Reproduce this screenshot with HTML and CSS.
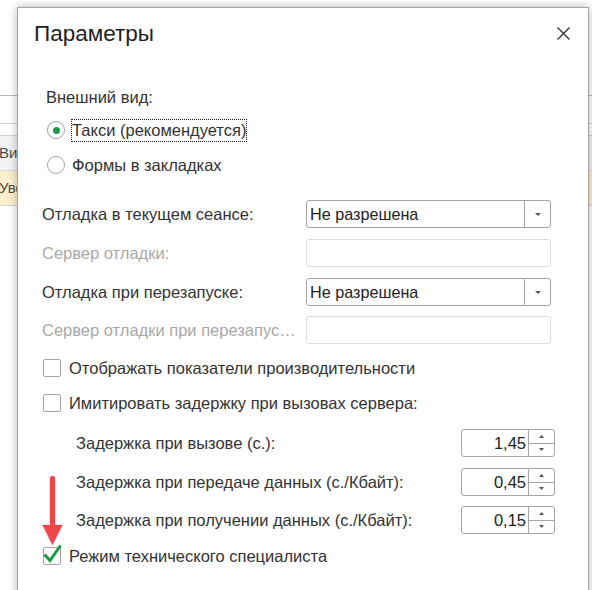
FILE: index.html
```html
<!DOCTYPE html>
<html lang="ru">
<head>
<meta charset="utf-8">
<title>Параметры</title>
<link rel="stylesheet" href="styles.css">
</head>
<body>
<div class="bg">
  <div class="bg-a"></div>
  <div class="bg-b"></div>
  <div class="bg-c"></div>
  <div class="bg-head">Вид</div>
  <div class="bg-sel">Уволенные</div>
</div>

<div class="dialog">
  <div class="dlg-head">
    <h1>Параметры</h1>
    <span class="close"><svg width="13" height="13" viewBox="0 0 13 13"><path d="M0.5 0.5L12.5 12.5M12.5 0.5L0.5 12.5" stroke="#333" stroke-width="1.4" fill="none"/></svg></span>
  </div>
  <div class="dlg-body">
    <div class="group-title">Внешний вид:</div>
    <div class="radio-row r-first"><span class="radio on"></span><span class="focus">Такси (рекомендуется)</span></div>
    <div class="radio-row r-second"><span class="radio"></span><span>Формы в закладках</span></div>

    <div class="field-row f1"><span class="lbl">Отладка в текущем сеансе:</span><div class="select"><span class="val">Не разрешена</span><span class="btn"><svg width="6" height="3" viewBox="0 0 6 3"><path d="M0 0H6L3 3Z" fill="#555"/></svg></span></div></div>
    <div class="field-row f2"><span class="lbl dim">Сервер отладки:</span><div class="input"></div></div>
    <div class="field-row f3"><span class="lbl">Отладка при перезапуске:</span><div class="select"><span class="val">Не разрешена</span><span class="btn"><svg width="6" height="3" viewBox="0 0 6 3"><path d="M0 0H6L3 3Z" fill="#555"/></svg></span></div></div>
    <div class="field-row f4"><span class="lbl dim">Сервер отладки при перезапуске:</span><div class="input"></div></div>

    <div class="check-row c1"><span class="box"></span><span>Отображать показатели производительности</span></div>
    <div class="check-row c2"><span class="box"></span><span>Имитировать задержку при вызовах сервера:</span></div>

    <div class="sub-row s1"><span class="sub-lbl">Задержка при вызове (с.):</span><div class="spin"><span class="num">1,45</span><span class="arrows"><span class="up"><svg width="5" height="3" viewBox="0 0 5 3"><path d="M0 3H5L2.5 0Z" fill="#555"/></svg></span><span class="down"><svg width="5" height="3" viewBox="0 0 5 3"><path d="M0 0H5L2.5 3Z" fill="#555"/></svg></span></span></div></div>
    <div class="sub-row s2"><span class="sub-lbl">Задержка при передаче данных (с./Кбайт):</span><div class="spin"><span class="num">0,45</span><span class="arrows"><span class="up"><svg width="5" height="3" viewBox="0 0 5 3"><path d="M0 3H5L2.5 0Z" fill="#555"/></svg></span><span class="down"><svg width="5" height="3" viewBox="0 0 5 3"><path d="M0 0H5L2.5 3Z" fill="#555"/></svg></span></span></div></div>
    <div class="sub-row s3"><span class="sub-lbl">Задержка при получении данных (с./Кбайт):</span><div class="spin"><span class="num">0,15</span><span class="arrows"><span class="up"><svg width="5" height="3" viewBox="0 0 5 3"><path d="M0 3H5L2.5 0Z" fill="#555"/></svg></span><span class="down"><svg width="5" height="3" viewBox="0 0 5 3"><path d="M0 0H5L2.5 3Z" fill="#555"/></svg></span></span></div></div>

    <div class="check-row c3"><span class="box"><svg class="tick" width="18" height="18" viewBox="0 0 18 18"><path d="M1.5 7.5L7 13.5L17.5 -1.5" stroke="#1a9c45" stroke-width="3" fill="none"/></svg></span><span>Режим технического специалиста</span></div>
  </div>
</div>

<svg class="pointer" width="26" height="76" viewBox="0 0 26 76"><path d="M10 5.5A2.5 2.5 0 0 1 15 5.5V52H22.5L12.5 72L2.5 52H10Z" fill="#f0464b"/></svg>
</body>
</html>
```

FILE: styles.css
```css
* { box-sizing: border-box; }

html, body {
  margin: 0;
  padding: 0;
}

body {
  width: 592px;
  height: 590px;
  overflow: hidden;
  position: relative;
  background: #fff;
  font-family: "Liberation Sans", Arial, sans-serif;
  font-size: 16.5px;
  color: #333;
}

/* background form under the dialog */
.bg { font-size: 15px; }
.bg-a { height: 96px; border-bottom: 1px solid #b8b8b8; }
.bg-b { height: 28px; border-bottom: 1px solid #cfcfcf; }
.bg-c { height: 12px; border-bottom: 1px solid #cfcfcf; }
.bg-head {
  height: 35px;
  background: #f2f2f2;
  border-bottom: 1px solid #dcdcdc;
  line-height: 34px;
  color: #4a4a4a;
  text-indent: -1px;
}
.bg-sel {
  height: 35px;
  background: #fbf0cd;
  border-bottom: 1px solid #d6d6d6;
  line-height: 34px;
  color: #4a4a4a;
  text-indent: -1px;
}

/* dialog window */
.dialog {
  position: absolute;
  left: 17px;
  top: 7px;
  width: 572px;
  height: 600px;
  background: #fff;
  border: 1px solid #a4a4a4;
  box-shadow: 0 0 9px rgba(0, 0, 0, 0.28);
}

.dlg-head {
  height: 52px;
  display: flex;
  align-items: center;
  justify-content: space-between;
  padding: 0 18px 0 16px;
}

.dlg-head h1 {
  margin: 0;
  font-size: 22.5px;
  font-weight: normal;
  color: #1e1e1e;
  line-height: 52px;
}

.close {
  display: flex;
  margin-top: -2px;
}

.dlg-body {
  display: flex;
  flex-direction: column;
  padding: 0 33px 0 24px;
}

.group-title {
  height: 24px;
  line-height: 24px;
  margin: 25px 0 0 4px;
}

.radio-row {
  height: 24px;
  display: flex;
  align-items: center;
  gap: 7px;
  margin-left: 5px;
}
.r-first { margin-top: 9px; }
.r-second { margin-top: 11px; }

.radio {
  width: 18px;
  height: 18px;
  border: 1px solid #a3a3a3;
  border-radius: 50%;
  display: flex;
  align-items: center;
  justify-content: center;
  flex: none;
}
.radio.on::after {
  content: "";
  width: 7px;
  height: 7px;
  border-radius: 50%;
  background: #1c9a4c;
}

.focus {
  line-height: 21px;
  outline: 1px dotted #222;
}

.field-row {
  height: 28px;
  display: flex;
  align-items: center;
}
.f1 { margin-top: 23px; }
.f2 { margin-top: 11px; }
.f3 { margin-top: 11px; }
.f4 { margin-top: 10px; }

.lbl {
  width: 264px;
  flex: none;
  padding-right: 9px;
  white-space: nowrap;
  overflow: hidden;
  text-overflow: ellipsis;
}
.lbl.dim { color: #a8a8a8; }

.select {
  width: 245px;
  height: 28px;
  border: 1px solid #a3a3a3;
  border-radius: 3px;
  display: flex;
}
.select .val {
  flex: 1;
  padding-left: 3px;
  font-size: 16.2px;
  line-height: 26px;
  color: #222;
}
.select .btn {
  width: 26px;
  border-left: 1px solid #a3a3a3;
  display: flex;
  align-items: center;
  justify-content: center;
}

.input {
  width: 245px;
  height: 28px;
  border: 1px solid #dcdcdc;
  border-radius: 3px;
}

.check-row {
  height: 24px;
  display: flex;
  align-items: center;
  gap: 8px;
  margin-left: 1px;
}
.c1 { margin-top: 12px; }
.c2 { margin-top: 11px; }
.c3 { margin-top: 10px; }

.box {
  width: 18px;
  height: 18px;
  border: 1px solid #a3a3a3;
  border-radius: 2px;
  flex: none;
}
.tick {
  display: block;
  overflow: visible;
  margin: -1px 0 0 -1px;
}

.sub-row {
  height: 28px;
  display: flex;
  align-items: center;
}
.s1 { margin-top: 14px; }
.s2 { margin-top: 11px; }
.s3 { margin-top: 10px; }

.sub-lbl { margin-left: 34px; }

.spin {
  margin-left: auto;
  width: 94px;
  height: 28px;
  border: 1px solid #a6a6a6;
  border-radius: 3px;
  display: flex;
}
.spin .num {
  flex: 1;
  text-align: right;
  padding-right: 2px;
  font-size: 16.5px;
  line-height: 26px;
  color: #222;
}
.spin .arrows {
  width: 26px;
  border-left: 1px solid #a6a6a6;
  display: flex;
  flex-direction: column;
}
.spin .up, .spin .down {
  flex: 1;
  display: flex;
  align-items: center;
  justify-content: center;
}
.spin .down { border-top: 1px solid #a6a6a6; }

/* red annotation arrow over the form */
.pointer {
  position: absolute;
  left: 40px;
  top: 473px;
  filter: drop-shadow(0 0 1px rgba(0, 0, 0, 0.25));
}
```
